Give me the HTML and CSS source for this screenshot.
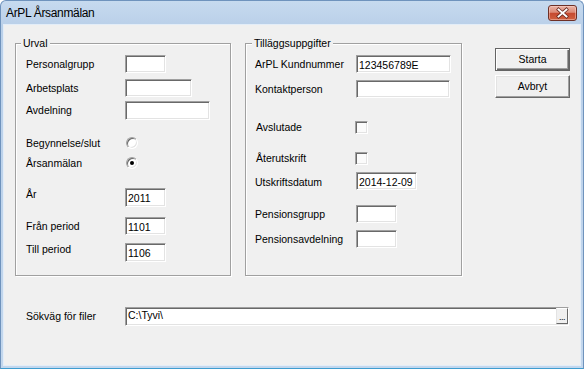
FILE: index.html
```html
<!DOCTYPE html>
<html lang="sv">
<head>
<meta charset="utf-8">
<title>ArPL Årsanmälan</title>
<link rel="stylesheet" href="styles.css">
</head>
<body>
<div class="window">
  <div class="titlebar">
    <span class="title">ArPL Årsanmälan</span>
    <div class="close">
      <svg width="27" height="14" viewBox="0 0 27 14">
        <path d="M9.5 3.5 L17.5 10.5 M17.5 3.5 L9.5 10.5" stroke="#6a2a20" stroke-width="3.4" stroke-linecap="square" fill="none"/>
        <path d="M9.5 3.5 L17.5 10.5 M17.5 3.5 L9.5 10.5" stroke="#ffffff" stroke-width="1.9" stroke-linecap="square" fill="none"/>
      </svg>
    </div>
  </div>
  <div class="client">
    <div class="top">
      <div class="group urval">
        <span class="legend">Urval</span>
        <div class="row u1"><span class="lbl">Personalgrupp</span><span class="edit w41"></span></div>
        <div class="row u2"><span class="lbl">Arbetsplats</span><span class="edit w67"></span></div>
        <div class="row u3"><span class="lbl">Avdelning</span><span class="edit w85 h19"></span></div>
        <div class="row u4"><span class="lbl">Begynnelse/slut</span><span class="radio"></span></div>
        <div class="row u5"><span class="lbl">Årsanmälan</span><span class="radio"><span class="dot"></span></span></div>
        <div class="row u6"><span class="lbl lbl-top">År</span><span class="edit w41 h19">2011</span></div>
        <div class="row u7"><span class="lbl">Från period</span><span class="edit w41">1101</span></div>
        <div class="row u8"><span class="lbl lbl-top">Till period</span><span class="edit w41 h19">1106</span></div>
      </div>
      <div class="group extra">
        <span class="legend">Tilläggsuppgifter</span>
        <div class="row e1"><span class="lbl">ArPL Kundnummer</span><span class="edit w95">123456789E</span></div>
        <div class="row e2"><span class="lbl">Kontaktperson</span><span class="edit w94"></span></div>
        <div class="row e3"><span class="lbl lbl-in">Avslutade</span><span class="check"></span></div>
        <div class="row e4"><span class="lbl lbl-in">Återutskrift</span><span class="check"></span></div>
        <div class="row e5"><span class="lbl lbl-low">Utskriftsdatum</span><span class="edit w61">2014-12-09</span></div>
        <div class="row e6"><span class="lbl">Pensionsgrupp</span><span class="edit w41"></span></div>
        <div class="row e7"><span class="lbl">Pensionsavdelning</span><span class="edit w41"></span></div>
      </div>
      <div class="buttons">
        <div class="btn default">Starta</div>
        <div class="btn">Avbryt</div>
      </div>
    </div>
    <div class="pathrow">
      <span class="lbl">Sökväg för filer</span>
      <div class="pathbox">
        <span class="pathtext">C:\Tyvi\</span>
        <span class="browse">...</span>
      </div>
    </div>
  </div>
</div>
</body>
</html>
```
FILE: styles.css
```css
* { box-sizing: border-box; }
html, body { margin: 0; padding: 0; }
body {
  width: 584px;
  height: 369px;
  overflow: hidden;
  font-family: "Liberation Sans", Arial, sans-serif;
  font-size: 10.5px;
  color: #000;
  background: #ffffff;
}
.window {
  width: 584px;
  height: 369px;
  display: flex;
  flex-direction: column;
  background: linear-gradient(#c6daef, #bad0e9 24px, #c3d7ed);
  border: 1px solid #6f93bd;
  border-bottom-color: #3e9dd0;
  border-radius: 6px 6px 0 0;
}
.titlebar {
  height: 24px;
  display: flex;
  align-items: flex-start;
  padding-left: 5px;
}
.title {
  font-size: 12px;
  letter-spacing: -0.35px;
  line-height: 14px;
  margin-top: 5px;
  white-space: nowrap;
}
.close {
  margin-left: auto;
  margin-right: 6px;
  margin-top: 4px;
  width: 29px;
  height: 16px;
  border: 1px solid #6e3026;
  border-radius: 3px;
  background: linear-gradient(#eab3a5 0%, #dc8a76 45%, #c64a30 52%, #d0603f 100%);
  box-shadow: inset 0 0 0 1px rgba(255, 220, 210, 0.45);
}
.close svg { display: block; }
.client {
  flex: 1;
  margin: 0 3px 3px;
  background: #f0f0f0;
  box-shadow: 0 0 0 1px #e3edf8;
  display: flex;
  flex-direction: column;
  padding: 18px 0 0 11px;
}
.top {
  display: flex;
  align-items: flex-start;
}
.group {
  height: 233px;
  border: 1px solid #a0a0a0;
  box-shadow: inset 1px 1px 0 #ffffff, 1px 1px 0 #ffffff;
}
.urval { width: 216px; padding-left: 10px; }
.extra { width: 217px; margin-left: 14px; padding-left: 9px; }
.legend {
  display: block;
  width: max-content;
  height: 13px;
  line-height: 13px;
  margin-top: -7px;
  padding: 0 2px;
  background: #f0f0f0;
  white-space: nowrap;
}
.urval .legend { margin-left: -5px; }
.extra .legend { margin-left: -3px; }

.row { display: flex; align-items: center; }
.lbl { line-height: 13px; white-space: nowrap; flex: none; }
.urval .lbl { width: 99px; }
.extra .lbl { width: 101px; }
.lbl-top { align-self: flex-start; }
.lbl-low { align-self: flex-start; margin-top: 4px; }

.u1 { margin-top: 5px; height: 18px; }
.u2 { margin-top: 6px; height: 18px; }
.u3 { margin-top: 4px; height: 19px; }
.u4 { margin-top: 17px; height: 12px; }
.u5 { margin-top: 8px; height: 12px; }
.u6 { margin-top: 19px; height: 19px; }
.u7 { margin-top: 10px; height: 18px; }
.u8 { margin-top: 8px; height: 19px; }

.e1 { margin-top: 5px; height: 18px; }
.e2 { margin-top: 7px; height: 18px; }
.e3 { margin-top: 23px; height: 13px; }
.e4 { margin-top: 18px; height: 13px; }
.e5 { margin-top: 7px; height: 18px; }
.e6 { margin-top: 15px; height: 18px; }
.e7 { margin-top: 7px; height: 18px; }
.lbl-in { padding-left: 1px; }

.edit {
  display: block;
  height: 18px;
  border: 1px solid;
  border-color: #a0a0a0 #ffffff #ffffff #a0a0a0;
  box-shadow: inset 1px 1px 0 #696969, inset -1px -1px 0 #e3e3e3;
  background: #ffffff;
  padding: 3px 2px 0;
  line-height: 13px;
  white-space: nowrap;
  overflow: hidden;
  flex: none;
}
.h19 { height: 19px; }
.w41 { width: 41px; }
.w61 { width: 61px; }
.w67 { width: 67px; }
.w85 { width: 85px; }
.w94 { width: 94px; }
.w95 { width: 95px; }

.radio {
  width: 12px;
  height: 12px;
  margin-left: 1px;
  border-radius: 50%;
  border: 1px solid;
  border-color: #a0a0a0 #ffffff #ffffff #a0a0a0;
  box-shadow: inset 1px 1px 0 #696969, inset -1px -1px 0 #e3e3e3;
  background: #ffffff;
  display: flex;
  align-items: center;
  justify-content: center;
  flex: none;
}
.dot {
  width: 4px;
  height: 4px;
  border-radius: 50%;
  background: #000;
}
.check {
  width: 13px;
  height: 13px;
  margin-left: -1px;
  border: 1px solid;
  border-color: #a0a0a0 #ffffff #ffffff #a0a0a0;
  box-shadow: inset 1px 1px 0 #696969, inset -1px -1px 0 #e3e3e3;
  background: #fbfbfb;
  flex: none;
}

.buttons {
  display: flex;
  flex-direction: column;
  gap: 4px;
  margin-left: 33px;
  margin-top: 5px;
}
.btn {
  width: 75px;
  height: 23px;
  display: flex;
  align-items: center;
  justify-content: center;
  line-height: 13px;
  background: #f0f0f0;
  border: 1px solid;
  border-color: #ffffff #696969 #696969 #ffffff;
  box-shadow: inset -1px -1px 0 #a0a0a0, inset 1px 1px 0 #e3e3e3;
}
.btn.default {
  border-color: #646464;
  box-shadow: inset 1px 1px 0 #ffffff, inset -1px -1px 0 #696969, inset -2px -2px 0 #a0a0a0;
}

.pathrow {
  display: flex;
  align-items: center;
  margin-top: 31px;
  padding-left: 11px;
  height: 19px;
}
.pathrow .lbl { width: 99px; }
.pathbox {
  width: 444px;
  height: 19px;
  display: flex;
  align-items: flex-start;
  border: 1px solid;
  border-color: #a0a0a0 #ffffff #ffffff #a0a0a0;
  box-shadow: inset 1px 1px 0 #696969, inset -1px -1px 0 #e3e3e3;
  background: #ffffff;
}
.pathtext {
  flex: 1;
  line-height: 13px;
  padding: 1px 2px 0;
  white-space: nowrap;
}
.browse {
  width: 12px;
  height: 16px;
  margin-top: 0;
  background: #f0f0f0;
  border: 1px solid;
  border-color: #ffffff #696969 #696969 #e3e3e3;
  font-size: 9px;
  line-height: 17px;
  text-align: center;
  letter-spacing: -0.5px;
  overflow: hidden;
}
```
